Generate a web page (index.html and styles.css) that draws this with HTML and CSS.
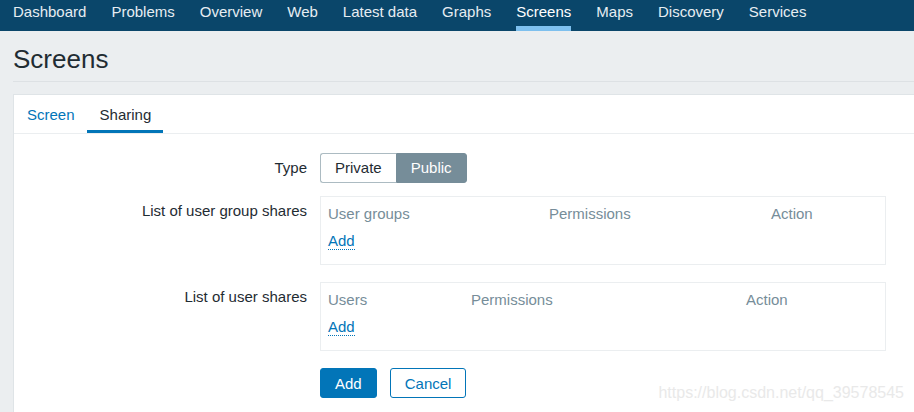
FILE: index.html
```html
<!DOCTYPE html>
<html lang="en">
<head>
<meta charset="utf-8">
<title>Screens</title>
<link rel="stylesheet" href="styles.css">
</head>
<body>
<nav class="topnav">
  <a class="nav-item">Dashboard</a>
  <a class="nav-item">Problems</a>
  <a class="nav-item">Overview</a>
  <a class="nav-item">Web</a>
  <a class="nav-item">Latest data</a>
  <a class="nav-item">Graphs</a>
  <a class="nav-item active">Screens</a>
  <a class="nav-item">Maps</a>
  <a class="nav-item">Discovery</a>
  <a class="nav-item">Services</a>
</nav>
<header class="page-header">
  <h1 class="page-title">Screens</h1>
</header>
<main class="card">
  <div class="tabs">
    <a class="tab">Screen</a>
    <a class="tab active">Sharing</a>
  </div>
  <form class="form">
    <div class="row row-type">
      <div class="label">Type</div>
      <div class="control">
        <div class="radio-group">
          <span class="radio-opt">Private</span>
          <span class="radio-opt selected">Public</span>
        </div>
      </div>
    </div>
    <div class="row row-table">
      <div class="label">List of user group shares</div>
      <div class="control">
        <div class="share-table groups">
          <div class="th">User groups</div>
          <div class="th">Permissions</div>
          <div class="th">Action</div>
          <div class="td"><a class="link">Add</a></div>
        </div>
      </div>
    </div>
    <div class="row row-table">
      <div class="label">List of user shares</div>
      <div class="control">
        <div class="share-table users">
          <div class="th">Users</div>
          <div class="th">Permissions</div>
          <div class="th">Action</div>
          <div class="td"><a class="link">Add</a></div>
        </div>
      </div>
    </div>
    <div class="row row-buttons">
      <div class="label"></div>
      <div class="control buttons">
        <button type="button" class="btn btn-primary">Add</button>
        <button type="button" class="btn btn-alt">Cancel</button>
      </div>
    </div>
  </form>
</main>
<div class="watermark">https://blog.csdn.net/qq_39578545</div>
</body>
</html>
```

FILE: styles.css
```css
html, body {
  margin: 0;
  padding: 0;
  overflow: hidden;
}
body {
  background: #ebeef0;
  font-family: "Liberation Sans", Arial, sans-serif;
  font-size: 15px;
  color: #1f2c33;
  width: 914px;
  height: 412px;
  position: relative;
}

.topnav {
  display: flex;
  gap: 25px;
  height: 31px;
  padding-left: 13px;
  background: #0a466a;
  box-sizing: border-box;
}
.nav-item {
  display: block;
  color: #e6edf2;
  line-height: 18px;
  padding-top: 3px;
  padding-bottom: 4px;
  border-bottom: 5px solid transparent;
  text-decoration: none;
}
.nav-item.active {
  color: #ffffff;
  border-bottom-color: #7ec0ee;
}

.page-header {
  margin-left: 13px;
  padding-top: 13px;
  padding-bottom: 7px;
  border-bottom: 1px solid #dde1e4;
}
.page-title {
  margin: 0;
  font-size: 26px;
  font-weight: normal;
  line-height: 30px;
  color: #1f2c33;
}

.card {
  display: block;
  margin: 12px 0 0 13px;
  background: #ffffff;
  border: 1px solid #dfe4e7;
  border-right: none;
  border-bottom: none;
  height: 318px;
  box-sizing: border-box;
}

.tabs {
  display: flex;
  border-bottom: 1px solid #ebeef0;
}
.tab {
  display: block;
  padding: 11px 12px 6px 13px;
  line-height: 18px;
  border-bottom: 3px solid transparent;
  color: #0275b8;
}
.tab.active {
  color: #1f2c33;
  border-bottom-color: #0275b8;
}

.form {
  padding-top: 19px;
}
.row {
  display: grid;
  grid-template-columns: 293px 566px;
  column-gap: 13px;
}
.row-type {
  margin-bottom: 13px;
}
.row-table {
  margin-bottom: 17px;
}
.label {
  text-align: right;
  padding-top: 6px;
  line-height: 18px;
  color: #1f2c33;
}

.radio-group {
  display: inline-flex;
  height: 30px;
  box-sizing: border-box;
}
.radio-opt {
  display: block;
  padding: 0 14px;
  line-height: 28px;
  border: 1px solid #acbbc2;
  background: #ffffff;
  color: #1f2c33;
}
.radio-opt:first-child {
  border-radius: 3px 0 0 3px;
  border-right: none;
}
.radio-opt.selected {
  background: #768d99;
  border-color: #768d99;
  color: #ffffff;
  border-radius: 0 3px 3px 0;
}

.share-table {
  display: grid;
  border: 1px solid #ebeef0;
  padding: 8px 7px 14px;
  row-gap: 9px;
  line-height: 18px;
}
.share-table.groups {
  grid-template-columns: 221px 222px 1fr;
}
.share-table.users {
  grid-template-columns: 143px 275px 1fr;
}
.th {
  color: #768d99;
}
.td {
  grid-column: 1 / -1;
}
.link {
  color: #0275b8;
  border-bottom: 1px dotted #0275b8;
  cursor: pointer;
}

.buttons {
  display: flex;
  gap: 13px;
}
.btn {
  height: 30px;
  padding: 0 14px;
  font-family: "Liberation Sans", Arial, sans-serif;
  font-size: 15px;
  border-radius: 3px;
  border: 1px solid #0275b8;
}
.btn-primary {
  background: #0275b8;
  color: #ffffff;
}
.btn-alt {
  background: #ffffff;
  color: #0275b8;
}

.watermark {
  position: absolute;
  right: 10px;
  top: 384px;
  font-size: 16px;
  line-height: 18px;
  color: #e9e9e9;
  pointer-events: none;
}
```
